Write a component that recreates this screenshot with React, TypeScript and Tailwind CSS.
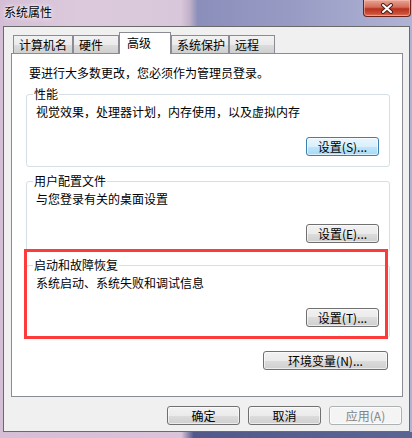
import React from "react";

type BtnProps = {
  label: string;
  width: string;
  variant?: "normal" | "default" | "disabled";
};

const WinButton = ({ label, width, variant = "normal" }: BtnProps) => {
  const look =
    variant === "default"
      ? "border-[#3c7fb1] bg-[linear-gradient(#eaf6fd_0%,#d9f0fc_50%,#bee6fd_50%,#a7d9f5_100%)] text-black"
      : variant === "disabled"
        ? "border-[#adb2b5] bg-[#f4f4f4] text-[#838383]"
        : "border-[#707070] bg-[linear-gradient(#f2f2f2_0%,#ebebeb_50%,#dddddd_50%,#cfcfcf_100%)] text-black";

  return (
    <div
      className={`${width} h-[19px] flex items-center justify-center rounded-[3px] border text-[12px] leading-[16px] shadow-[inset_0_0_0_1px_rgba(255,255,255,0.6)] ${look}`}
    >
      {label}
    </div>
  );
};

type GroupProps = {
  title: string;
  text: string;
  button: React.ReactNode;
  className?: string;
  bottomPad?: string;
};

const GroupBox = ({ title, text, button, className = "", bottomPad = "pb-[10px]" }: GroupProps) => (
  <fieldset className={`border border-[#d5dfe5] rounded-[3px] ${className}`}>
    <legend className="ml-[6px] px-[1px] text-[12px] leading-[14px] text-black">{title}</legend>
    <div className={`pl-[9px] pr-[10px] ${bottomPad}`}>
      <p className="mt-[3px] text-[12px] leading-[16px] text-black">{text}</p>
      <div className="mt-[17px] flex justify-end">{button}</div>
    </div>
  </fieldset>
);

const tabs = [
  { label: "计算机名", w: "w-[60px]" },
  { label: "硬件", w: "w-[46px]" },
  { label: "高级", w: "w-[52px]", active: true },
  { label: "系统保护", w: "w-[58px]" },
  { label: "远程", w: "w-[46px]" },
];

export default function App() {
  return (
    <div className="w-[412px] h-[438px] flex flex-col overflow-hidden font-['Noto_Sans_CJK_SC','Noto_Sans',sans-serif] bg-[linear-gradient(90deg,#d4bed6_0%,#dccadc_20%,#d8c6da_44%,#c2b2ca_46%,#8a8eba_48%,#979bc4_70%,#b0b3d4_100%)]">
      {/* title bar */}
      <div className="h-[26px] flex items-start">
        <span className="pl-[4px] pt-[4px] text-[12px] leading-[16px] text-black [text-shadow:0_0_6px_#ffffff,0_0_3px_#ffffff]">
          系统属性
        </span>
        <div className="ml-auto mr-[1px] w-[48px] h-[17px] flex items-center justify-center rounded-b-[4px] border border-t-0 border-[#6b2218] bg-[linear-gradient(#e9a595_0%,#d36c58_45%,#b8321c_55%,#c9503a_85%,#e07a60_100%)] shadow-[inset_0_0_0_1px_rgba(255,200,190,0.5)]">
          <svg width="14" height="11" viewBox="0 0 14 11">
            <path d="M3 2 L11 9 M11 2 L3 9" stroke="#4a1f1a" strokeWidth="4" strokeLinecap="round" />
            <path d="M3 2 L11 9 M11 2 L3 9" stroke="#ffffff" strokeWidth="2" strokeLinecap="round" />
          </svg>
        </div>
      </div>

      {/* dialog body */}
      <div className="ml-[3px] w-[407px] h-[406px] border border-[#6a6a6a] bg-[#f0f0f0] pt-[5px] pl-[7px] pr-[6px]">
        {/* tabs */}
        <div className="h-[21px] flex items-end pl-[2px]">
          {tabs.map((t) =>
            t.active ? (
              <div
                key={t.label}
                className={`${t.w} h-[22px] -mb-px relative z-10 border border-b-0 border-[#898c95] bg-white pl-[7px] pt-[2px] text-[12px] leading-[16px] text-black`}
              >
                {t.label}
              </div>
            ) : (
              <div
                key={t.label}
                className={`${t.w} h-[18px] border border-b-0 border-[#898c95] bg-[linear-gradient(#f2f2f2_0%,#ebebeb_50%,#dddddd_50%,#cfcfcf_100%)] pl-[5px] pt-[1px] text-[12px] leading-[16px] text-black`}
              >
                {t.label}
              </div>
            ),
          )}
        </div>

        {/* tab panel */}
        <div className="h-[344px] border border-[#898c95] bg-white pl-[14px] pr-[12px]">
          <p className="mt-[11px] pl-[3px] text-[12px] leading-[16px] text-black">
            要进行大多数更改，您必须作为管理员登录。
          </p>

          <GroupBox
            className="mt-[6px]"
            title="性能"
            text="视觉效果，处理器计划，内存使用，以及虚拟内存"
            button={<WinButton label="设置(S)..." width="w-[73px]" variant="default" />}
          />

          <GroupBox
            className="mt-[7px]"
            bottomPad="pb-[8px]"
            title="用户配置文件"
            text="与您登录有关的桌面设置"
            button={<WinButton label="设置(E)..." width="w-[73px]" />}
          />

          <div className="relative mt-[6px]">
            <GroupBox
              title="启动和故障恢复"
              text="系统启动、系统失败和调试信息"
              button={<WinButton label="设置(T)..." width="w-[73px]" />}
            />
            {/* red highlight annotation */}
            <div className="absolute left-[-2px] right-[2px] top-[-9px] bottom-[-1px] border-[3px] border-[#fd3b3b] pointer-events-none" />
          </div>

          <div className="mt-[13px] flex justify-end pr-[2px]">
            <WinButton label="环境变量(N)..." width="w-[125px]" />
          </div>
        </div>

        {/* dialog buttons */}
        <div className="mt-[9px] flex justify-end gap-[8px] pr-[1px]">
          <WinButton label="确定" width="w-[73px]" />
          <WinButton label="取消" width="w-[73px]" />
          <WinButton label="应用(A)" width="w-[73px]" variant="disabled" />
        </div>
      </div>

      {/* bottom frame */}
      <div className="flex-1 bg-[linear-gradient(90deg,#d6bed6_0%,#dac4da_44%,#52598a_47%,#5b6594_100%)]" />
    </div>
  );
}
